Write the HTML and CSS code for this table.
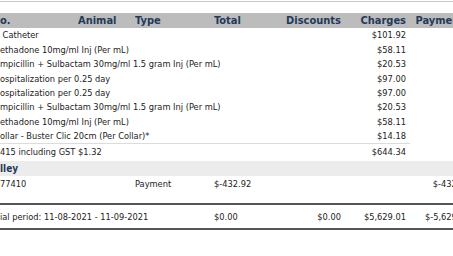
FILE: index.html
```html
<!DOCTYPE html>
<html>
<head>
<meta charset="utf-8">
<link rel="stylesheet" href="styles.css">
</head>
<body>
<div class="page">
  <div class="topline"></div>
  <table class="ledger">
    <colgroup>
      <col class="c-no"><col class="c-animal"><col class="c-type"><col class="c-total"><col class="c-disc"><col class="c-charge"><col class="c-pay">
    </colgroup>
    <thead>
      <tr class="head">
        <th class="l">o.</th>
        <th class="l">Animal</th>
        <th class="l">Type</th>
        <th class="l">Total</th>
        <th class="r">Discounts</th>
        <th class="r">Charges</th>
        <th class="r">Payments</th>
      </tr>
    </thead>
    <tbody>
      <tr class="item"><td colspan="5" class="desc">&nbsp;Catheter</td><td class="r">$101.92</td><td></td></tr>
      <tr class="item tall"><td colspan="5" class="desc">ethadone 10mg/ml Inj (Per mL)</td><td class="r">$58.11</td><td></td></tr>
      <tr class="item"><td colspan="5" class="desc">mpicillin + Sulbactam 30mg/ml 1.5 gram Inj (Per mL)</td><td class="r">$20.53</td><td></td></tr>
      <tr class="item tall"><td colspan="5" class="desc">ospitalization per 0.25 day</td><td class="r">$97.00</td><td></td></tr>
      <tr class="item"><td colspan="5" class="desc">ospitalization per 0.25 day</td><td class="r">$97.00</td><td></td></tr>
      <tr class="item"><td colspan="5" class="desc">mpicillin + Sulbactam 30mg/ml 1.5 gram Inj (Per mL)</td><td class="r">$20.53</td><td></td></tr>
      <tr class="item tall"><td colspan="5" class="desc">ethadone 10mg/ml Inj (Per mL)</td><td class="r">$58.11</td><td></td></tr>
      <tr class="item last"><td colspan="5" class="desc">ollar - Buster Clic 20cm (Per Collar)*</td><td class="r">$14.18</td><td class="nob"></td></tr>
      <tr class="subtotal"><td colspan="5" class="desc">415 including GST $1.32</td><td class="r">$644.34</td><td></td></tr>
      <tr class="band"><td colspan="7">lley</td></tr>
      <tr class="pay"><td>77410</td><td></td><td>Payment</td><td>$-432.92</td><td></td><td></td><td class="r">$-432.92</td></tr>
      <tr class="sum"><td colspan="3">ial period: 11-08-2021 - 11-09-2021</td><td>$0.00</td><td class="r">$0.00</td><td class="r">$5,629.01</td><td class="r">$-5,629.01</td></tr>
    </tbody>
  </table>
</div>
</body>
</html>
```

FILE: styles.css
```css
html, body {
  margin: 0;
  padding: 0;
  background: #ffffff;
  overflow: hidden;
}
.page {
  width: 453px;
  height: 256px;
  overflow: hidden;
  font-family: "DejaVu Sans Condensed", "DejaVu Sans", sans-serif;
  font-stretch: condensed;
  font-size: 9.2px;
  color: #222222;
}
.topline {
  height: 1px;
  margin-top: 1px;
  background: #c9c9c9;
  margin-bottom: 11px;
}
.ledger {
  border-collapse: collapse;
  table-layout: fixed;
  width: 474px;
}
.c-no { width: 78px; }
.c-animal { width: 57px; }
.c-type { width: 79px; }
.c-total { width: 70px; }
.c-disc { width: 61px; }
.c-charge { width: 65px; }
.c-pay { width: 64px; }
.ledger td, .ledger th {
  padding: 0;
  white-space: nowrap;
  overflow: hidden;
}
.ledger .r { text-align: right; padding-right: 4px; }
.ledger .l { text-align: left; }
.head th {
  background: #bcbcbc;
  color: #24395a;
  font-weight: bold;
  font-size: 11px;
  height: 15px;
  line-height: 15px;
}
.item td {
  height: 14px;
  line-height: 14px;
}
.item.tall td {
  height: 15px;
  line-height: 15px;
}
.item.last td {
  height: 14px;
  border-bottom: 1px solid #dcdcdc;
}
.item.last td.nob {
  border-bottom: none;
}
.subtotal td {
  height: 17px;
  line-height: 16px;
  vertical-align: top;
}
.band td {
  background: #ececec;
  color: #24395a;
  font-weight: bold;
  font-size: 10px;
  height: 15px;
  line-height: 15px;
}
.pay td {
  height: 27px;
  line-height: 16px;
  vertical-align: top;
}
.sum td {
  height: 22px;
  line-height: 23px;
  border-top: 2px solid #555555;
  border-bottom: 2px solid #555555;
}
```
